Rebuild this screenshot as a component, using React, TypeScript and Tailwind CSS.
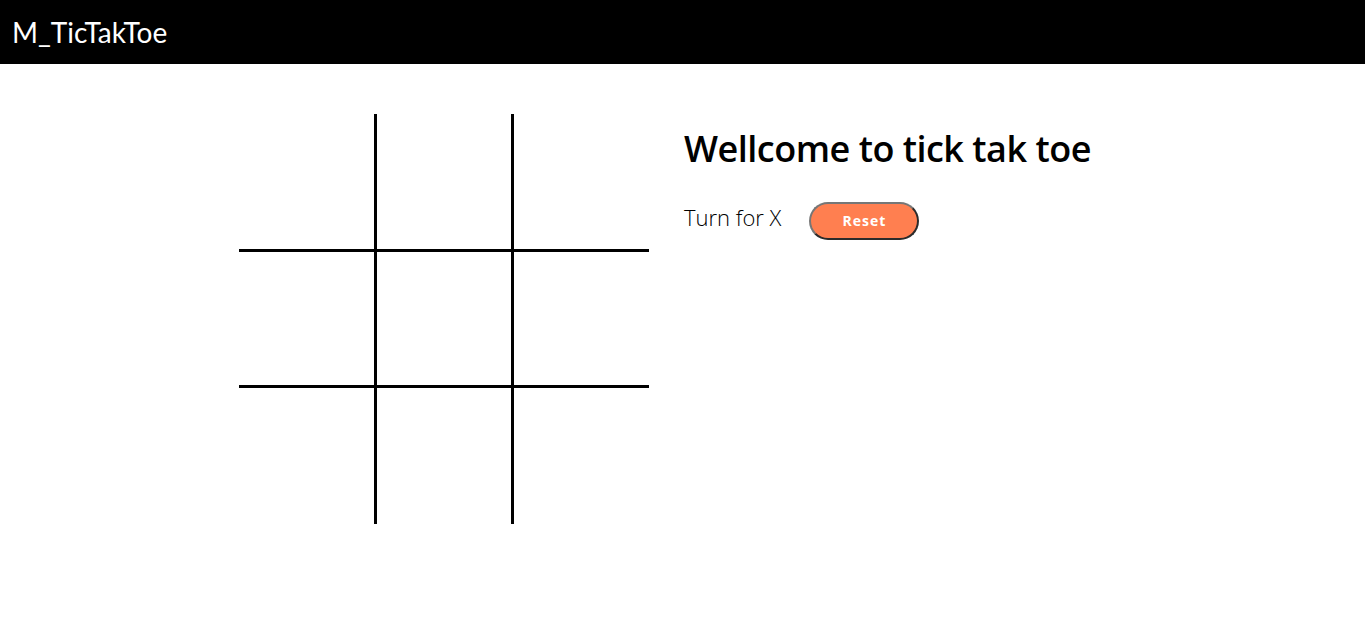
import React, { useState } from 'react';

type Cell = 'X' | 'O' | null;

const cellBorders = [
  'border-b-[3px] border-black',
  'border-x-[3px] border-b-[3px] border-black',
  'border-b-[3px] border-black',
  'border-b-[3px] border-black',
  'border-x-[3px] border-b-[3px] border-black',
  'border-b-[3px] border-black',
  '',
  'border-x-[3px] border-black',
  '',
];

export default function App() {
  const [board, setBoard] = useState<Cell[]>(Array(9).fill(null));
  const [turn, setTurn] = useState<'X' | 'O'>('X');

  const play = (i: number) => {
    if (board[i]) return;
    const next = [...board];
    next[i] = turn;
    setBoard(next);
    setTurn(turn === 'X' ? 'O' : 'X');
  };

  const reset = () => {
    setBoard(Array(9).fill(null));
    setTurn('X');
  };

  return (
    <div className="min-h-screen bg-white">
      <header className="h-16 bg-black flex items-center px-3">
        <h1 className="text-white text-[28px] font-['Lato',sans-serif] pb-[1px]">M_TicTakToe</h1>
      </header>

      <main className="flex justify-center gap-[35px] pt-[50px] pr-[22px]">
        <div className="grid grid-cols-[135px_140px_135px] grid-rows-[138px_136px_136px]">
          {board.map((c, i) => (
            <button
              key={i}
              onClick={() => play(i)}
              className={`flex items-center justify-center text-6xl font-['Open_Sans',sans-serif] ${cellBorders[i]}`}
            >
              {c}
            </button>
          ))}
        </div>

        <div className="w-[420px] font-['Open_Sans',sans-serif]">
          <h2 className="mt-[17px] text-[36px] font-semibold text-black leading-none tracking-[-0.5px]">
            Wellcome to tick tak toe
          </h2>
          <div className="mt-[34px] flex items-baseline gap-[28px]">
            <span className="text-[22px] text-black font-light">Turn for {turn}</span>
            <button
              onClick={reset}
              className="w-[110px] h-[38px] rounded-full bg-[#ff7f50] border-2 border-t-[#767676] border-l-[#767676] border-b-[#2b2b2b] border-r-[#2b2b2b] text-white text-[14px] font-bold tracking-[1px]"
            >
              Reset
            </button>
          </div>
        </div>
      </main>
    </div>
  );
}
